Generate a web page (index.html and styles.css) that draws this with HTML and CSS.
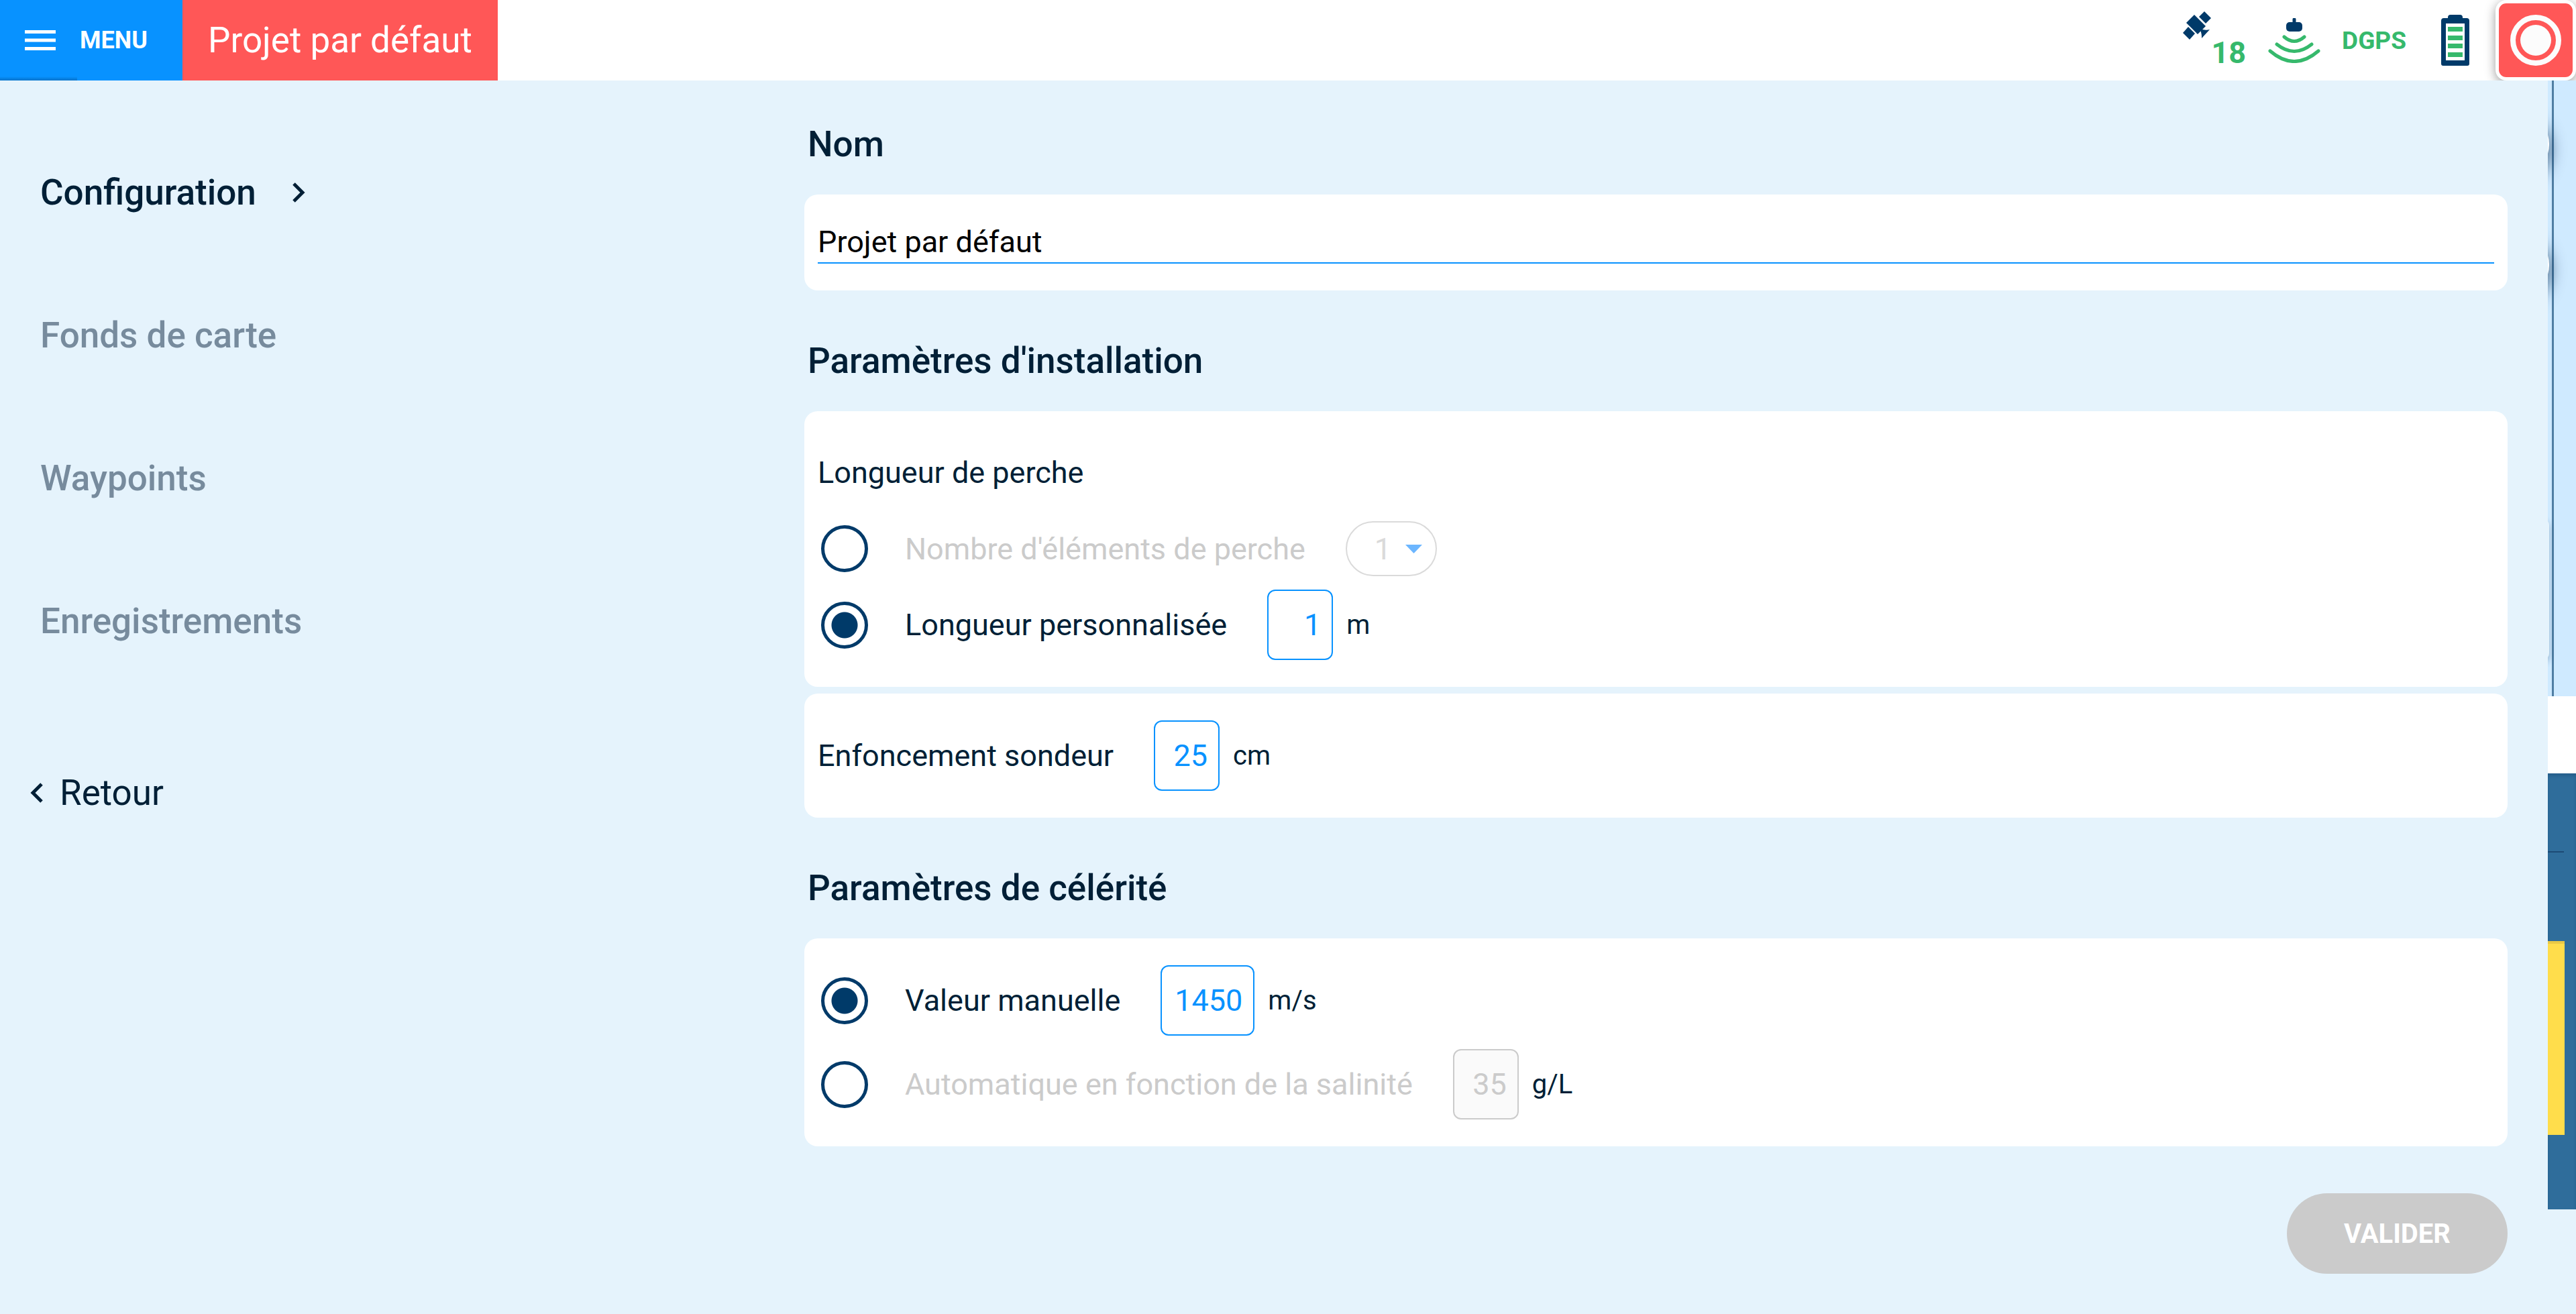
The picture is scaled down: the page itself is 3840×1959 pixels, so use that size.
FILE: index.html
```
<!DOCTYPE html>
<html lang="fr">

<head>
    <meta charset="UTF-8">
    <title>Projet par défaut</title>
    <link rel="stylesheet" href="styles.css">
</head>

<body>

    <header class="topbar">
        <button class="menu-btn" type="button">
            <svg width="46" height="30" viewBox="0 0 46 30">
                <path d="M0 0h46v5H0zM0 12.5h46v5H0zM0 25h46v5H0z" fill="#fff" />
            </svg>
            MENU
        </button>
        <h1 class="project">Projet par défaut</h1>

        <div class="status">
            <div class="satellites">
                <svg width="42" height="42" viewBox="0 0 42 42" fill="#003a69">
                    <path d="M17 5 34 22 22 34 5 17z" />
                    <path d="M32 0 42 10 34 18 24 8z" />
                    <path d="M8 23 18 33 10 42 0 32z" />
                    <path d="M27 26C31 28 36 28 40 27L28 40C28 36 28 33 26 28z" />
                </svg>
                <span>18</span>
            </div>
            <svg class="sonar" width="78" height="67" viewBox="0 0 78 67">
                <path d="M39 2v10" stroke="#003a69" stroke-width="5" stroke-linecap="round" />
                <rect x="27" y="6" width="24" height="14" rx="5" fill="#003a69" />
                <path d="M24 28Q39 41 54 28M13 39Q39 60 65 39M3 49Q39 80 75 49" fill="none" stroke="#36b96c" stroke-width="5" stroke-linecap="round" />
            </svg>
            <span class="dgps">DGPS</span>
            <svg class="battery" width="42" height="76" viewBox="0 0 42 76">
                <path d="M10 5V4Q10 0 14 0H28Q32 0 32 4V5H38Q42 5 42 9V73Q42 76 39 76H3Q0 76 0 73V9Q0 5 4 5z" fill="#003a69" />
                <path d="M7 13H35V68H7z" fill="#fff" />
                <path d="M10 18h22v7H10zM10 31h22v7H10zM10 43h22v7H10zM10 56h22v7H10z" fill="#36b96c" />
            </svg>
        </div>

        <button class="record" type="button" aria-label="Enregistrer">
            <svg width="76" height="76" viewBox="0 0 76 76">
                <circle cx="38" cy="38" r="34" fill="none" stroke="#fcfcfc" stroke-width="8" />
                <circle cx="38" cy="38" r="23" fill="#fcfcfc" />
            </svg>
        </button>
    </header>

    <div class="page">
        <nav class="sidebar">
            <a class="nav-item active" href="#configuration">Configuration
                <svg width="20" height="32" viewBox="0 0 20 32">
                    <path d="M3 3 16 16 3 29" fill="none" stroke="#001f36" stroke-width="5" />
                </svg>
            </a>
            <a class="nav-item" href="#fonds">Fonds de carte</a>
            <a class="nav-item" href="#waypoints">Waypoints</a>
            <a class="nav-item" href="#enregistrements">Enregistrements</a>
            <a class="back" href="#retour">
                <svg width="20" height="32" viewBox="0 0 20 32">
                    <path d="M17 3 4 16 17 29" fill="none" stroke="#001f36" stroke-width="5" />
                </svg>
                Retour
            </a>
        </nav>

        <main class="content">
            <form>
                <h2><label for="nom">Nom</label></h2>
                <div class="card card-name">
                    <input class="name-input" id="nom" type="text" value="Projet par défaut">
                </div>

                <h2>Paramètres d'installation</h2>
                <div class="card">
                    <p class="group-title">Longueur de perche</p>
                    <div class="row row-tall">
                        <input class="radio" type="radio" name="perche" id="perche-nb">
                        <label class="off" for="perche-nb">Nombre d'éléments de perche</label>
                        <div class="select-box">
                            <select aria-label="Nombre d'éléments" disabled>
                                <option>1</option>
                            </select>
                            <svg class="arrow" width="25" height="13" viewBox="0 0 25 13">
                                <path d="M0 0h25L12.5 13z" fill="#6cb6ff" />
                            </svg>
                        </div>
                    </div>
                    <div class="row">
                        <input class="radio" type="radio" name="perche" id="perche-perso" checked>
                        <label for="perche-perso">Longueur personnalisée</label>
                        <input class="value" type="text" value="1" aria-label="Longueur en mètres">
                        <span class="unit">m</span>
                    </div>
                </div>
                <div class="card">
                    <div class="row">
                        <label for="enfoncement">Enfoncement sondeur</label>
                        <input class="value" id="enfoncement" type="text" value="25">
                        <span class="unit">cm</span>
                    </div>
                </div>

                <h2>Paramètres de célérité</h2>
                <div class="card card-rows">
                    <div class="row">
                        <input class="radio" type="radio" name="celerite" id="cel-manuel" checked>
                        <label for="cel-manuel">Valeur manuelle</label>
                        <input class="value value-wide" type="text" value="1450" aria-label="Célérité en m/s">
                        <span class="unit">m/s</span>
                    </div>
                    <div class="row">
                        <input class="radio" type="radio" name="celerite" id="cel-auto">
                        <label class="off" for="cel-auto">Automatique en fonction de la salinité</label>
                        <input class="value" type="text" value="35" aria-label="Salinité en g/L" disabled>
                        <span class="unit">g/L</span>
                    </div>
                </div>

                <div class="actions">
                    <button class="validate" type="submit" disabled>VALIDER</button>
                </div>
            </form>
        </main>

        <!-- edge of the map that stays visible behind the panel -->
        <aside class="map-edge">
            <div class="map">
                <div class="knob knob-top"></div>
                <div class="knob knob-bottom"></div>
                <div class="tool"></div>
            </div>
            <div class="map-gap"></div>
            <div class="depth">
                <div class="depth-line"></div>
                <div class="depth-value"></div>
            </div>
        </aside>
    </div>

</body>

</html>
```
FILE: styles.css
```
* {
    box-sizing: border-box;
}

body {
    margin: 0;
    min-height: 100vh;
    background-color: #e5f3fc;
    color: #001f36;
    font-family: Roboto, sans-serif;
    font-size: 45px;
}

button,
input,
select {
    font-family: inherit;
    margin: 0;
}

a {
    color: inherit;
    text-decoration: none;
}

/* top bar */

.topbar {
    display: flex;
    height: 120px;
    background-color: white;
    overflow: hidden;
}

.menu-btn {
    position: relative;
    display: flex;
    align-items: center;
    gap: 36px;
    width: 272px;
    padding: 0 0 0 37px;
    border: none;
    background-color: #0892ff;
    color: white;
    font-size: 36px;
    font-weight: 700;
}

.menu-btn::after {
    content: "";
    position: absolute;
    left: 0;
    bottom: 0;
    width: 115px;
    height: 6px;
    background: linear-gradient(transparent, rgba(0, 58, 105, .35));
}

.project {
    margin: 0;
    padding: 0 38px;
    background-color: #ff5757;
    color: white;
    font-size: 53px;
    font-weight: 400;
    line-height: 120px;
}

.status {
    display: flex;
    align-items: center;
    margin-left: auto;
    margin-right: 39px;
    color: #36b96c;
}

.satellites {
    display: flex;
    height: 86px;
    margin-right: 33px;
    font-size: 45px;
    font-weight: 700;
}

.satellites span {
    align-self: flex-end;
    line-height: 48px;
}

.sonar {
    margin-right: 32px;
}

.dgps {
    margin-right: 52px;
    font-size: 37px;
    font-weight: 700;
}

.record {
    display: flex;
    align-items: center;
    justify-content: center;
    width: 120px;
    height: 120px;
    padding: 0;
    border: 5px solid white;
    border-radius: 16px;
    background-color: #ff5757;
    box-shadow: 0 4px 16px rgba(0, 0, 0, .4);
}

/* panel */

.page {
    display: flex;
}

.sidebar {
    flex: 0 0 30vw;
    display: flex;
    flex-direction: column;
    align-items: flex-start;
    gap: 149px;
    padding: 135px 0 0 60px;
    font-size: 53px;
    line-height: 64px;
}

.nav-item {
    display: flex;
    align-items: center;
    gap: 53px;
    color: #778b9d;
    font-weight: 500;
}

.nav-item.active {
    color: #001f36;
}

.back {
    display: flex;
    align-items: center;
    gap: 24px;
    margin: 43px 0 0 -15px;
}

.content {
    flex: 1;
    padding: 65px 60px 60px 47px;
}

h2 {
    margin: 75px 0 45px 5px;
    font-size: 53px;
    font-weight: 500;
    line-height: 60px;
}

h2:first-child {
    margin-top: 0;
}

.card {
    padding: 40px 20px;
    border-radius: 20px;
    background-color: white;
}

.card + .card {
    margin-top: 10px;
}

.card-name {
    padding-top: 45px;
}

.name-input {
    display: block;
    width: 100%;
    height: 58px;
    padding: 0 0 6px;
    border: none;
    border-bottom: 2px solid #0892ff;
    color: black;
    font-size: 45px;
    outline: none;
}

.group-title {
    margin: 0;
    line-height: 104px;
}

.row {
    display: flex;
    align-items: center;
}

.row-tall {
    height: 122px;
}

.card-rows .row + .row {
    margin-top: 20px;
}

.radio {
    appearance: none;
    width: 70px;
    height: 70px;
    margin: 0 55px 0 5px;
    border: 5px solid #003a69;
    border-radius: 50%;
}

.radio:checked {
    background: radial-gradient(circle, #003a69 19px, white 20px);
}

.off {
    color: #cbcbcb;
}

.value {
    width: 98px;
    height: 105px;
    margin-left: 60px;
    padding: 0 16px 0 0;
    border: 2px solid #0892ff;
    border-radius: 12px;
    background-color: white;
    color: #0892ff;
    font-size: 45px;
    text-align: right;
}

.value-wide {
    width: 140px;
}

.value:disabled {
    border-color: #cbcbcb;
    background-color: #fafafa;
    color: #cbcbcb;
}

.unit {
    margin-left: 20px;
    font-size: 40px;
}

.select-box {
    position: relative;
    margin-left: 60px;
}

.select-box select {
    display: block;
    appearance: none;
    width: 136px;
    height: 82px;
    padding: 0 0 0 41px;
    border: 2px solid #dadada;
    border-radius: 41px;
    background-color: white;
    color: #dadada;
    font-size: 45px;
    opacity: 1;
}

.arrow {
    position: absolute;
    top: 35px;
    right: 22px;
}

.actions {
    display: flex;
    justify-content: flex-end;
    margin-top: 70px;
}

.validate {
    width: 329px;
    height: 120px;
    border: none;
    border-radius: 60px;
    background-color: #cbcbcb;
    color: white;
    font-size: 40px;
    font-weight: 700;
}

/* map edge */

.map-edge {
    flex: 0 0 42px;
    overflow: hidden;
}

.map {
    position: relative;
    height: 918px;
    background: linear-gradient(90deg, transparent 6px, #4f7ea3 6px, #4f7ea3 9px, transparent 9px) #cfeaff;
    overflow: hidden;
}

.knob {
    position: absolute;
    left: -98px;
    width: 100px;
    height: 100px;
    border-radius: 50%;
    background-color: white;
    box-shadow: 0 8px 24px rgba(0, 40, 80, .8);
}

.knob-top {
    top: 45px;
}

.knob-bottom {
    top: 225px;
}

.tool {
    position: absolute;
    top: 653px;
    left: -98px;
    width: 100px;
    height: 211px;
    border-radius: 10px;
    background-color: #e5f3fc;
    box-shadow: 0 4px 10px rgba(0, 40, 80, .3);
}

.map-gap {
    height: 115px;
    background-color: white;
}

.depth {
    height: 650px;
    padding-top: 116px;
    background-color: #2f6d9b;
    box-shadow: inset 0 4px 4px rgba(0, 40, 80, .2);
}

.depth-line {
    width: 24px;
    height: 2px;
    background-color: #1d4a75;
}

.depth-value {
    width: 25px;
    height: 289px;
    margin-top: 132px;
    border-top: 4px solid #e8c846;
    background-color: #ffdd4b;
}
```
